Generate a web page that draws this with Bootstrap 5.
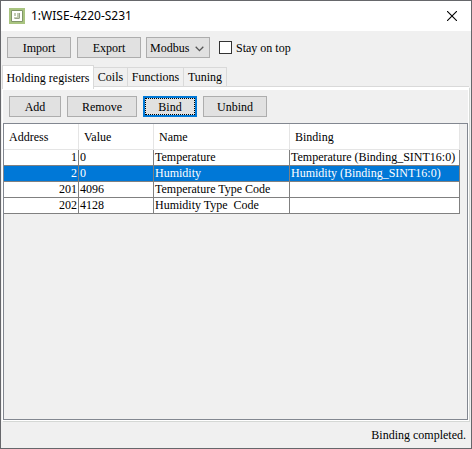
<!DOCTYPE html>
<html lang="en">
<head>
<meta charset="utf-8">
<meta name="viewport" content="width=device-width, initial-scale=1">
<title>1:WISE-4220-S231</title>
<link href="https://cdn.jsdelivr.net/npm/bootstrap@5.3.0/dist/css/bootstrap.min.css" rel="stylesheet">
<style>
body { font: 12px/16px "Liberation Serif", serif; color: #000; background: #f0f0f0; }
.window { border: 1px solid #66676b; background: #f0f0f0; }
.title-bar { height: 30px; padding: 0 14px 0 8px; background: #fff; }
.title-text { font: 12px/20px "Noto Sans", sans-serif; padding-left: 6px; }
.close-btn { line-height: 0; }
.tool-row { padding: 6px 6px 0; gap: 6px; }
.push { height: 21px; padding: 0; border: 1px solid #adadad; border-radius: 0; background: #e1e1e1; color: #000; font: inherit; line-height: 18px; }
.push:hover { background: #e5f1fb; border-color: #0078d7; }
.w-s { width: 52px; } .w-m { width: 64px; } .w-l { width: 70px; }
.push.is-default { width: 54px; border: 2px solid #0078d7; outline: 1px dotted #000; outline-offset: -3px; line-height: 16px; }
.mode { width: 64px; margin-left: -1px; padding: 0 4px 0 3px; appearance: none; background: #e1e1e1 url("data:image/svg+xml,%3Csvg xmlns='http://www.w3.org/2000/svg' width='9' height='6'%3E%3Cpath d='M.7 .8l3.8 3.8L8.3 .8' fill='none' stroke='%23555' stroke-width='1.3'/%3E%3C/svg%3E") no-repeat right 5px top 8px; }
.stay { gap: 4px; margin-left: 3px; }
.tick { appearance: none; width: 13px; height: 13px; margin: 0; border: 1px solid #333; background: #fff; }
.tick:checked { background: #0078d7; }
.tabs { padding: 7px 1px 0; }
.tab-btn { height: 20px; padding: 0; border: 1px solid #d9d9d9; border-left: 0; background: #f0f0f0; color: #000; line-height: 18px; }
.tab-btn.current { width: 92px; height: 24px; margin-bottom: -2px; border-bottom: 0; border-left: 1px solid #d9d9d9; background: #fff; line-height: 20px; z-index: 1; }
.t-coils { width: 34px; } .t-func { width: 56px; } .t-tune { width: 43px; }
.page { margin: 0 2px 0 1px; border: 1px solid #fff; border-top-width: 3px; box-shadow: 0 -1px #d9d9d9, 1px 1px #d5d8d5; }
.page .tool-row { padding-bottom: 6px; padding-left: 6px; }
.grid-box { height: calc(100vh - 152px); border: 1px solid #828790; padding-right: 7px; }
.registers { width: 100%; table-layout: fixed; border-collapse: separate; border-spacing: 0; }
.registers th { height: 26px; padding: 0 5px; font-weight: 400; background: #fff; border-right: 1px solid #e5e5e5; border-bottom: 1px solid #e5e5e5; }
.registers td { height: 16px; padding: 0 1px; line-height: 15px; background: #fff; border-right: 1px solid #808080; border-bottom: 1px solid #808080; white-space: pre; }
.registers .picked td { background: #0078d7; color: #fff; }
.c-addr { width: 75px; } .c-val { width: 75px; } .c-name { width: 136px; }
.status { height: 27px; padding: 0 5px; }
</style>
<script src="https://cdn.jsdelivr.net/npm/bootstrap@5.3.0/dist/js/bootstrap.bundle.min.js"></script>
</head>
<body>
<main class="window d-flex flex-column min-vh-100">
  <header class="title-bar d-flex align-items-center">
    <svg width="16" height="16" viewBox="0 0 16 16" aria-hidden="true">
      <path fill="#a9c480" d="M0 0h16v16H0z"/>
      <path fill="#fff" stroke="#819569" d="M2.5 2.5h11v11h-11z"/>
      <path fill="#c3ccb5" d="M5 5h2v3H5zM8 5h3v6H5V9h3z"/>
      <path fill="#98a38b" d="M10 5h1v5h-1zM6 10h4v1H6z"/>
    </svg>
    <h1 class="title-text mb-0 flex-grow-1">1:WISE-4220-S231</h1>
    <button type="button" class="close-btn btn p-0 border-0" aria-label="Close">
      <svg width="10" height="10" viewBox="0 0 10 10"><path d="M0 0l10 10M10 0L0 10" stroke="#000" stroke-width="1.1"/></svg>
    </button>
  </header>

  <div class="tool-row d-flex align-items-center">
    <button type="button" class="btn push w-m">Import</button>
    <button type="button" class="btn push w-m">Export</button>
    <select class="push mode" aria-label="Protocol"><option>Modbus</option></select>
    <div class="stay d-flex align-items-center">
      <input type="checkbox" class="tick" id="stay">
      <label for="stay">Stay on top</label>
    </div>
  </div>

  <div class="tabs d-flex align-items-end" role="tablist">
    <button type="button" role="tab" aria-selected="true" class="tab-btn current position-relative">Holding registers</button>
    <button type="button" role="tab" aria-selected="false" class="tab-btn t-coils">Coils</button>
    <button type="button" role="tab" aria-selected="false" class="tab-btn t-func">Functions</button>
    <button type="button" role="tab" aria-selected="false" class="tab-btn t-tune">Tuning</button>
  </div>

  <section class="page flex-grow-1" role="tabpanel" aria-label="Holding registers">
    <div class="tool-row d-flex">
      <button type="button" class="btn push w-s">Add</button>
      <button type="button" class="btn push w-l">Remove</button>
      <button type="button" class="btn push is-default">Bind</button>
      <button type="button" class="btn push w-m">Unbind</button>
    </div>
    <div class="grid-box">
      <table class="registers">
        <colgroup><col class="c-addr"><col class="c-val"><col class="c-name"><col></colgroup>
        <thead><tr><th>Address</th><th>Value</th><th>Name</th><th>Binding</th></tr></thead>
        <tbody>
          <tr><td class="text-end">1</td><td>0</td><td>Temperature</td><td>Temperature (Binding_SINT16:0)</td></tr>
          <tr class="picked"><td class="text-end">2</td><td>0</td><td>Humidity</td><td>Humidity (Binding_SINT16:0)</td></tr>
          <tr><td class="text-end">201</td><td>4096</td><td>Temperature Type Code</td><td></td></tr>
          <tr><td class="text-end">202</td><td>4128</td><td>Humidity Type  Code</td><td></td></tr>
        </tbody>
      </table>
    </div>
  </section>

  <footer class="status d-flex align-items-center justify-content-end">Binding completed.</footer>
</main>
</body>
</html>
